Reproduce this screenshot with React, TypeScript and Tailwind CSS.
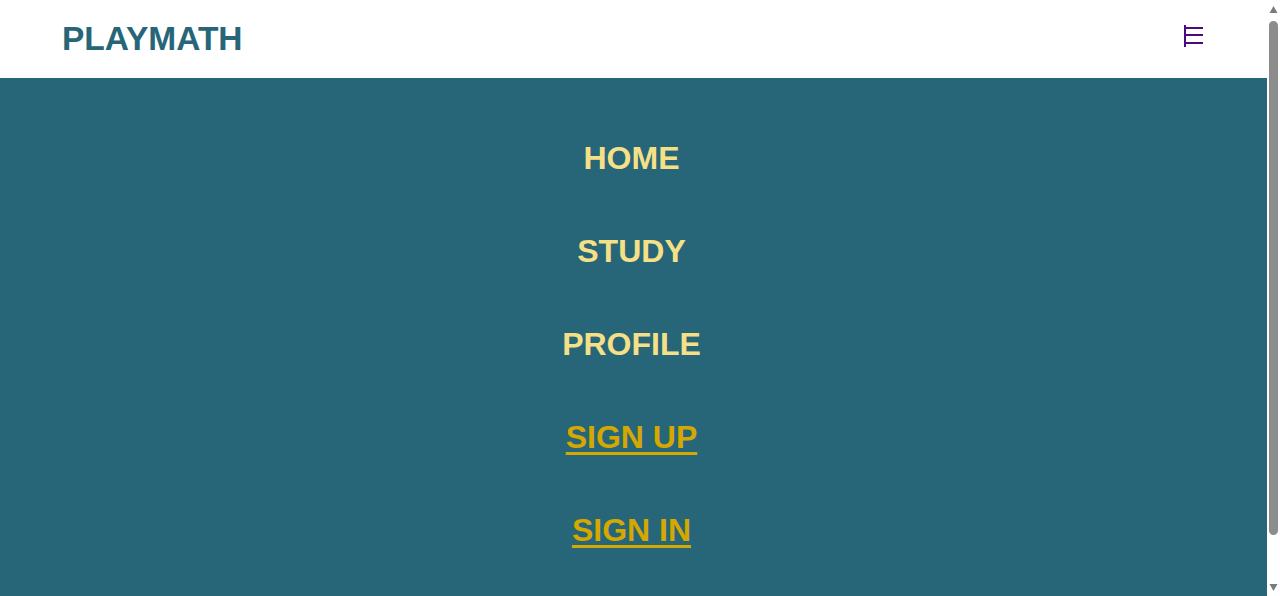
import React from 'react';

const links = [
  { label: 'HOME', accent: false },
  { label: 'STUDY', accent: false },
  { label: 'PROFILE', accent: false },
  { label: 'SIGN UP', accent: true },
  { label: 'SIGN IN', accent: true },
];

function Scrollbar() {
  return (
    <div className="flex w-[13px] shrink-0 flex-col items-center bg-white">
      <svg width="9" height="16" viewBox="0 0 9 16" className="shrink-0">
        <path d="M0.5 13L4.5 6L8.5 13Z" fill="#7b7b7b" />
      </svg>
      <div className="mt-[5px] h-[514px] w-[9px] rounded-full bg-[#8c8c8c]" />
      <div className="flex-1" />
      <svg width="9" height="16" viewBox="0 0 9 16" className="shrink-0">
        <path d="M0.5 4L4.5 11L8.5 4Z" fill="#7b7b7b" />
      </svg>
    </div>
  );
}

export default function App() {
  return (
    <div className="flex h-screen overflow-hidden bg-white" style={{ fontFamily: '"Liberation Sans", Arial, sans-serif' }}>
      <div className="flex-1 bg-[#276678]">
        <header className="flex h-[78px] items-center justify-between bg-white pl-[62px] pr-[64px]">
          <span className="text-[33.5px] font-bold leading-none text-[#276678]">PLAYMATH</span>
          <button aria-label="Toggle menu" className="mb-[6px] flex h-[22px] w-[19px] items-center justify-center">
            <svg width="19" height="22" viewBox="0 0 19 22" fill="#4b0a82">
              <rect x="0" y="0" width="2" height="22" />
              <rect x="0" y="2" width="19" height="2" />
              <rect x="0" y="9" width="19" height="2" />
              <rect x="0" y="17" width="19" height="2" />
            </svg>
          </button>
        </header>

        <nav className="pt-[33px] pb-[78px]">
          <ul className="flex flex-col items-center pr-[4px]">
            {links.map((link) => (
              <li key={link.label} className="flex h-[93px] items-center">
                <a
                  href="#"
                  className={
                    link.accent
                      ? 'text-[32px] font-bold text-[#d4a800] underline decoration-[3px] underline-offset-[4px]'
                      : 'text-[32px] font-bold text-[#f6e087]'
                  }
                >
                  {link.label}
                </a>
              </li>
            ))}
          </ul>
        </nav>
      </div>
      <Scrollbar />
    </div>
  );
}
